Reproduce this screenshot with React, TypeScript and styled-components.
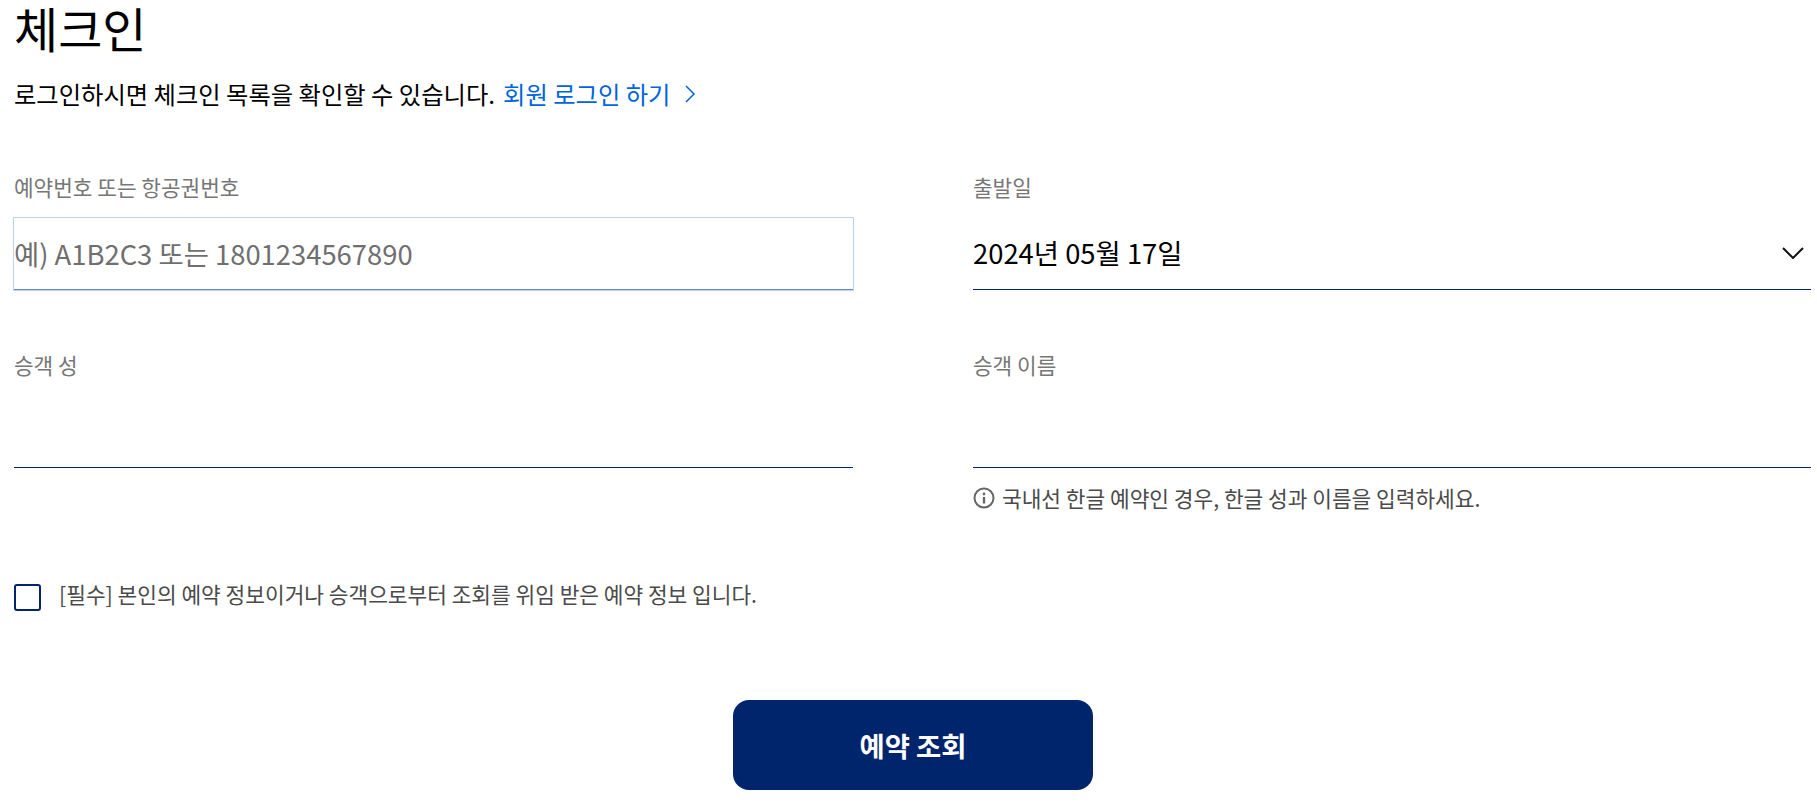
import React from "react";
import styled, { createGlobalStyle } from "styled-components";

const GlobalStyle = createGlobalStyle`
  html, body {
    margin: 0;
    padding: 0;
    background: #fff;
  }
  body {
    font-family: "Noto Sans CJK KR", "Noto Sans", sans-serif;
    overflow: hidden;
  }
`;

const Page = styled.div`
  height: 803px;
  padding: 0 5px 0 14px;
  box-sizing: border-box;
`;

const Title = styled.h1`
  margin: 0;
  font-size: 48px;
  font-weight: 400;
  line-height: 54px;
  color: #000;
`;

const Intro = styled.p`
  display: flex;
  align-items: center;
  margin: 22px 0 0;
  font-size: 24.3px;
  line-height: 36px;
  color: #000;
`;

const LoginLink = styled.a`
  display: inline-flex;
  align-items: center;
  margin-left: 8px;
  color: #0064de;
  text-decoration: none;
`;

const LinkArrow = styled.svg`
  width: 12px;
  height: 20px;
  margin-left: 14px;
  fill: none;
  stroke: #0064de;
  stroke-width: 1.5;
`;

const FormGrid = styled.div`
  display: grid;
  grid-template-columns: 839px 838px;
  column-gap: 120px;
  margin-top: 60px;
`;

const Field = styled.div`
  display: flex;
  flex-direction: column;
  height: 178px;
`;

const FieldLabel = styled.label`
  font-size: 21.33px;
  line-height: 30px;
  color: #767676;
`;

const TextBox = styled.div`
  display: flex;
  align-items: center;
  justify-content: space-between;
  height: 73px;
  margin-top: 15px;
  padding-bottom: 2px;
  box-sizing: border-box;
  font-size: 27.4px;
  border-bottom: 1px solid #00256c;
`;

const FocusedTextBox = styled(TextBox)`
  height: 74px;
  margin: 15px -1px -1px;
  border: 1px solid #bcd3f0;
  box-shadow: inset 0 -1px 0 #6c8bc4;
`;

const Placeholder = styled.span`
  color: #6f6f6f;
`;

const DateValue = styled.span`
  color: #000;
`;

const Chevron = styled.svg`
  width: 22px;
  height: 12px;
  margin: 2px 7px 0 0;
  fill: none;
  stroke: #111;
  stroke-width: 2;
`;

const Hint = styled.div`
  display: flex;
  align-items: center;
  gap: 7px;
  margin-top: 15px;
  font-size: 21.4px;
  line-height: 30px;
  color: #4a4a4a;
`;

const InfoIcon = styled.svg`
  width: 22px;
  height: 22px;
  fill: none;
  stroke: #666;
`;

const ConsentRow = styled.div`
  display: flex;
  align-items: flex-start;
  gap: 18px;
  margin-top: 56px;
`;

const CheckBox = styled.span`
  flex: none;
  width: 27px;
  height: 27px;
  box-sizing: border-box;
  border: 2px solid #00256c;
  border-radius: 3px;
`;

const ConsentText = styled.span`
  font-size: 21.4px;
  line-height: 30px;
  margin-top: -5px;
  color: #4a4a4a;
`;

const Actions = styled.div`
  display: flex;
  justify-content: center;
  margin-top: 89px;
`;

const SubmitButton = styled.button`
  width: 360px;
  height: 90px;
  border: 0;
  border-radius: 16px;
  background: #00256c;
  color: #fff;
  font-family: inherit;
  font-size: 27.4px;
  font-weight: 700;
`;

const App: React.FC = () => {
  return (
    <Page>
      <GlobalStyle />
      <Title>체크인</Title>
      <Intro>
        로그인하시면 체크인 목록을 확인할 수 있습니다.
        <LoginLink href="#">
          회원 로그인 하기
          <LinkArrow viewBox="0 0 12 20">
            <path d="M2 2l8 8-8 8" />
          </LinkArrow>
        </LoginLink>
      </Intro>
      <FormGrid>
        <Field>
          <FieldLabel>예약번호 또는 항공권번호</FieldLabel>
          <FocusedTextBox>
            <Placeholder>예) A1B2C3 또는 1801234567890</Placeholder>
          </FocusedTextBox>
        </Field>
        <Field>
          <FieldLabel>출발일</FieldLabel>
          <TextBox>
            <DateValue>2024년 05월 17일</DateValue>
            <Chevron viewBox="0 0 22 12">
              <path d="M1 1l10 10 10-10" />
            </Chevron>
          </TextBox>
        </Field>
        <Field>
          <FieldLabel>승객 성</FieldLabel>
          <TextBox />
        </Field>
        <Field>
          <FieldLabel>승객 이름</FieldLabel>
          <TextBox />
          <Hint>
            <InfoIcon viewBox="0 0 22 22">
              <circle cx="11" cy="11" r="9.5" strokeWidth="2" />
              <circle cx="11" cy="7" r="1.4" fill="#666" stroke="none" />
              <path d="M11 10v6.5" strokeWidth="2.4" />
            </InfoIcon>
            국내선 한글 예약인 경우, 한글 성과 이름을 입력하세요.
          </Hint>
        </Field>
      </FormGrid>
      <ConsentRow>
        <CheckBox />
        <ConsentText>
          [필수] 본인의 예약 정보이거나 승객으로부터 조회를 위임 받은 예약 정보 입니다.
        </ConsentText>
      </ConsentRow>
      <Actions>
        <SubmitButton>예약 조회</SubmitButton>
      </Actions>
    </Page>
  );
};

export default App;
